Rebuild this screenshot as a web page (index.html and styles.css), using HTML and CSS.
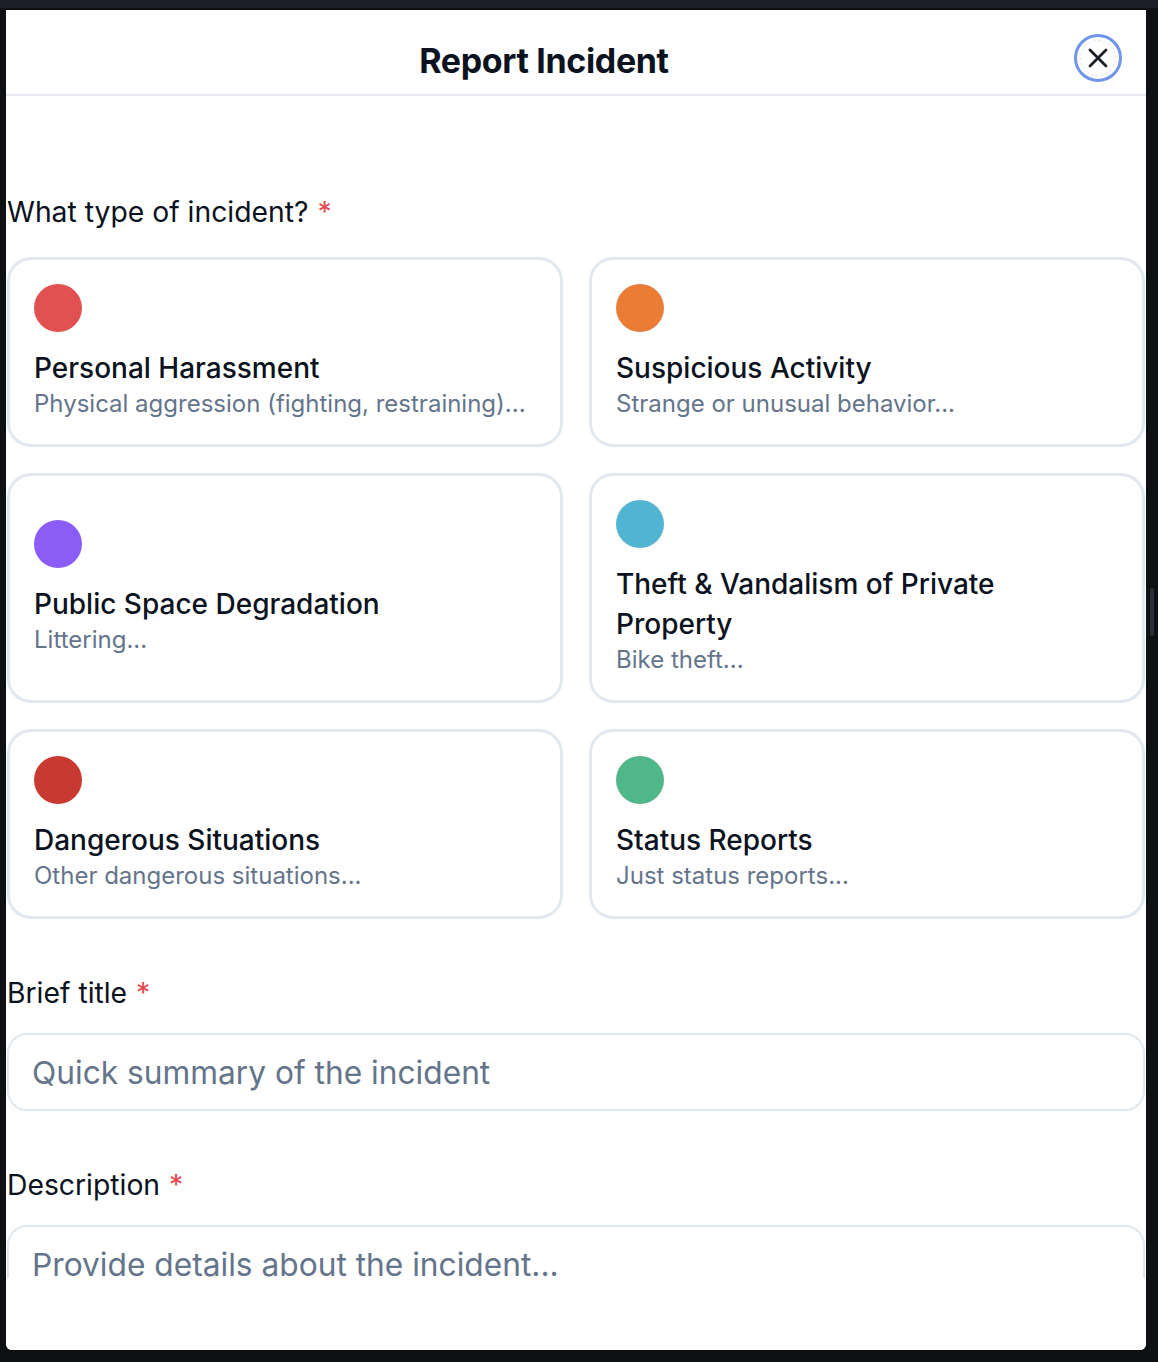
FILE: index.html
```html
<!DOCTYPE html>
<html lang="en">
<head>
<meta charset="utf-8">
<title>Report Incident</title>
<link rel="stylesheet" href="styles.css">
</head>
<body>
<div class="topbar"></div>
<div class="stage">
  <div class="modal">
    <header class="modal-header">
      <h1 class="modal-title">Report Incident</h1>
      <button class="close-btn" aria-label="Close">
        <span class="focus-ring"></span>
        <svg width="24" height="24" viewBox="0 0 24 24" fill="none" stroke="#1a1d24" stroke-width="2.8" stroke-linecap="round"><path d="M4 4L20 20M20 4L4 20"/></svg>
      </button>
    </header>
    <div class="modal-body">
      <div class="field field-first">
        <label class="label">What type of incident? <span class="req">*</span></label>
        <div class="type-grid">
          <div class="type-card">
            <span class="dot dot-red"></span>
            <div class="type-name">Personal Harassment</div>
            <div class="type-desc">Physical aggression (fighting, restraining)...</div>
          </div>
          <div class="type-card">
            <span class="dot dot-orange"></span>
            <div class="type-name">Suspicious Activity</div>
            <div class="type-desc">Strange or unusual behavior...</div>
          </div>
          <div class="type-card">
            <span class="dot dot-purple"></span>
            <div class="type-name">Public Space Degradation</div>
            <div class="type-desc">Littering...</div>
          </div>
          <div class="type-card">
            <span class="dot dot-cyan"></span>
            <div class="type-name">Theft &amp; Vandalism of Private Property</div>
            <div class="type-desc">Bike theft...</div>
          </div>
          <div class="type-card">
            <span class="dot dot-darkred"></span>
            <div class="type-name">Dangerous Situations</div>
            <div class="type-desc">Other dangerous situations...</div>
          </div>
          <div class="type-card">
            <span class="dot dot-green"></span>
            <div class="type-name">Status Reports</div>
            <div class="type-desc">Just status reports...</div>
          </div>
        </div>
      </div>
      <div class="field">
        <label class="label">Brief title <span class="req">*</span></label>
        <input class="text-input" type="text" placeholder="Quick summary of the incident">
      </div>
      <div class="field">
        <label class="label">Description <span class="req">*</span></label>
        <textarea class="text-area" placeholder="Provide details about the incident..."></textarea>
      </div>
    </div>
    <div class="modal-footer"></div>
  </div>
  <div class="scroll-thumb"></div>
</div>
</body>
</html>
```

FILE: styles.css
```css
* { box-sizing: border-box; }

html, body {
  margin: 0;
  padding: 0;
  background: #0f1014;
  font-family: Inter, "Noto Sans", "Liberation Sans", sans-serif;
  color: #0f172a;
}

.topbar {
  height: 8px;
  background: #1b1e26;
}

.stage {
  position: relative;
  padding: 2px 12px 0 6px;
  height: 1354px;
}

.modal {
  width: 1140px;
  height: 1340px;
  background: #ffffff;
  border-radius: 0 0 6px 6px;
  display: flex;
  flex-direction: column;
  overflow: hidden;
}

.modal-header {
  height: 86px;
  flex: none;
  display: flex;
  align-items: center;
  padding: 12px 24px 0 8px;
  border-bottom: 2px solid #e5e9ef;
}

.modal-title {
  flex: 1;
  margin: 0;
  padding-top: 5px;
  text-align: center;
  font-size: 34px;
  line-height: 44px;
  font-weight: 700;
  letter-spacing: -0.35px;
  color: #0b1220;
}

.close-btn {
  position: relative;
  width: 48px;
  height: 48px;
  border-radius: 50%;
  border: 3px solid #7095ea;
  background: #ffffff;
  padding: 0;
  display: flex;
  align-items: center;
  justify-content: center;
}

.focus-ring {
  position: absolute;
  inset: 3px;
  border-radius: 50%;
  border: 1px dashed #dce5f7;
}

.modal-body {
  flex: 1;
  overflow: hidden;
  padding: 0 1px 0 1px;
}

.modal-footer {
  height: 72px;
  flex: none;
  background: #ffffff;
}

.field {
  margin-top: 52px;
}

.field-first {
  margin-top: 94px;
}

.label {
  display: block;
  font-size: 28.3px;
  line-height: 44px;
  font-weight: 400;
  color: #0b1220;
  margin-bottom: 18px;
}

.field-first .label {
  margin-bottom: 23px;
}

.req {
  color: #e5484d;
  margin-left: 1px;
}

.type-grid {
  display: grid;
  grid-template-columns: 1fr 1fr;
  gap: 26px;
}

.type-card {
  border: 3px solid #e2e8f0;
  border-radius: 24px;
  padding: 24px;
  display: flex;
  flex-direction: column;
  justify-content: center;
}

.dot {
  width: 48px;
  height: 48px;
  border-radius: 50%;
  margin-bottom: 16px;
  flex: none;
}

.dot-red { background: #e05250; }
.dot-orange { background: #eb7c35; }
.dot-purple { background: #8b5cf6; }
.dot-cyan { background: #52b4d3; }
.dot-darkred { background: #c83a31; }
.dot-green { background: #52b788; }

.type-name {
  font-size: 28px;
  line-height: 40px;
  font-weight: 500;
  color: #0b1220;
  padding-right: 120px;
}

.type-desc {
  font-size: 24px;
  line-height: 32px;
  color: #64748b;
}

.text-input,
.text-area {
  display: block;
  width: 100%;
  border: 2px solid #e2e8f0;
  border-radius: 20px;
  background: #ffffff;
  font-family: Inter, "Noto Sans", "Liberation Sans", sans-serif;
  font-size: 31.7px;
  color: #0f172a;
  outline: none;
}

.text-input {
  height: 78px;
  padding: 0 23px;
}

.text-area {
  height: 160px;
  padding: 15px 23px;
  line-height: 45px;
  resize: none;
}

.text-input::placeholder,
.text-area::placeholder {
  color: #64748b;
}

.scroll-thumb {
  position: absolute;
  left: 1150px;
  top: 580px;
  width: 4px;
  height: 48px;
  border-radius: 2px;
  background: #2c2e37;
}
```
